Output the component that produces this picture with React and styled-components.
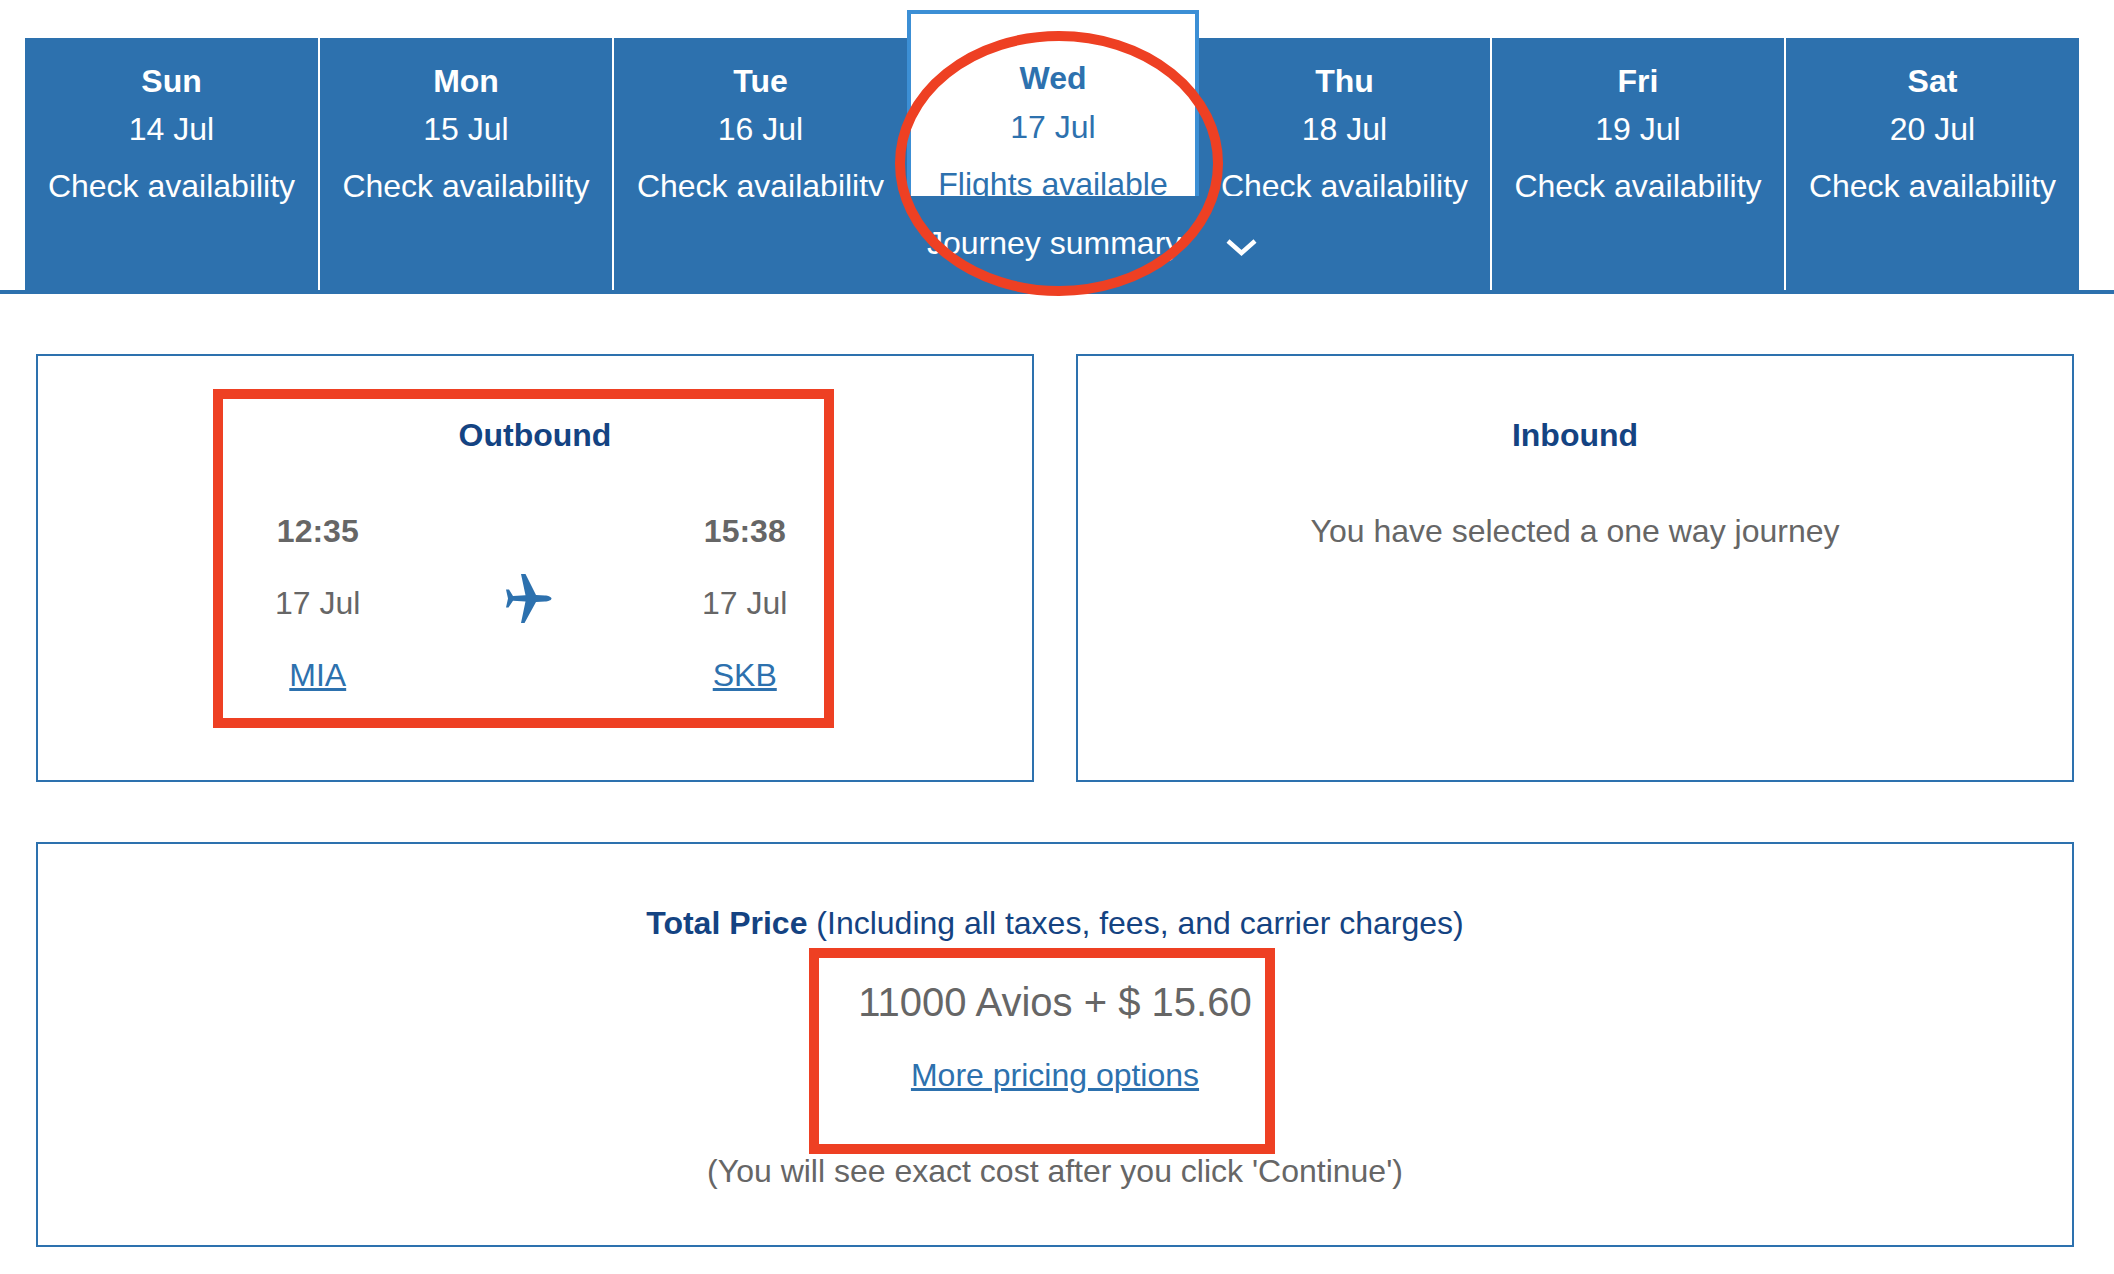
import React from "react";
import styled, { createGlobalStyle } from "styled-components";

const BLUE = "#2d71ae";
const NAVY = "#144382";
const GREY = "#666666";
const RED = "#ee4023";

const GlobalStyle = createGlobalStyle`
  html, body {
    margin: 0;
    background: #fff;
  }
  body {
    font-family: "Liberation Sans", Arial, sans-serif;
    font-size: 32px;
    line-height: 48px;
    color: ${GREY};
  }
  * {
    box-sizing: border-box;
  }
`;

const Page = styled.div`
  position: relative;
  width: 2114px;
  height: 1274px;
  overflow: hidden;
`;

const TabBar = styled.div`
  display: grid;
  grid-template-columns: 295px 294px 293px 292px 293px 294px 293px;
  height: 294px;
  padding: 38px 35px 0 25px;
  border-bottom: 4px solid ${BLUE};
`;

const Tab = styled.div`
  position: relative;
  height: 252px;
  padding-top: 19px;
  text-align: center;
  color: #fff;
  background: ${BLUE};
  border-right: ${(props) => (props.$divider ? "2px solid #fff" : "none")};
`;

const SelectedTab = styled(Tab)`
  margin-top: -28px;
  height: 280px;
  padding-top: 40px;
  color: ${BLUE};
  background: #fff;
  border: 4px solid #3c8fd5;
  border-bottom: none;
`;

const DayName = styled.div`
  font-weight: bold;
`;

const SelectedDate = styled.div`
  margin-top: 1px;
`;

const Status = styled.div`
  margin-top: 9px;
  white-space: nowrap;
`;

const JourneySummary = styled.div`
  position: absolute;
  left: 820px;
  top: 196px;
  width: 471px;
  height: 98px;
  padding: 23px 0 0 107px;
  display: flex;
  align-items: flex-start;
  gap: 45px;
  color: #fff;
  background: ${BLUE};
  white-space: nowrap;
`;

const Chevron = styled.svg`
  flex: none;
  margin-top: 20px;
`;

const Ellipse = styled.svg`
  position: absolute;
  left: 895px;
  top: 31px;
  pointer-events: none;
`;

const Main = styled.main`
  display: flex;
  flex-direction: column;
  gap: 60px;
  padding: 60px 40px 0 36px;
`;

const CardRow = styled.div`
  display: grid;
  grid-template-columns: 1fr 1fr;
  gap: 42px;
`;

const Card = styled.section`
  position: relative;
  height: ${(props) => props.$height}px;
  padding-top: 55px;
  text-align: center;
  border: 2px solid ${BLUE};
`;

const CardTitle = styled.h2`
  margin: 0;
  font-size: 32px;
  line-height: 48px;
  font-weight: bold;
  color: ${NAVY};
`;

const Note = styled.p`
  margin: 48px 0 0;
`;

const Route = styled.div`
  display: grid;
  grid-template-columns: repeat(3, 213.5px);
  margin: 48px 0 0 173px;
`;

const Stop = styled.div`
  display: flex;
  flex-direction: column;
  gap: 24px;
`;

const Time = styled.div`
  font-weight: bold;
`;

const PlaneCell = styled.div`
  display: flex;
  align-items: center;
  justify-content: center;
  padding: 0 6px 10px 0;
`;

const Link = styled.a`
  color: ${BLUE};
  text-decoration: underline;
`;

const PriceHeading = styled.div`
  color: ${NAVY};
`;

const Price = styled.div`
  margin-top: 25px;
  font-size: 40px;
  line-height: 60px;
`;

const PriceLink = styled.div`
  margin-top: 19px;
`;

const Disclaimer = styled.div`
  margin-top: 48px;
`;

const Highlight = styled.div`
  position: absolute;
  left: ${(props) => props.$left}px;
  top: ${(props) => props.$top}px;
  width: ${(props) => props.$width}px;
  height: ${(props) => props.$height}px;
  border: 10px solid ${RED};
  pointer-events: none;
`;

const days = [
  { name: "Sun", date: "14 Jul", divider: true },
  { name: "Mon", date: "15 Jul", divider: true },
  { name: "Tue", date: "16 Jul" },
  { name: "Wed", date: "17 Jul", status: "Flights available", selected: true },
  { name: "Thu", date: "18 Jul", divider: true },
  { name: "Fri", date: "19 Jul", divider: true },
  { name: "Sat", date: "20 Jul" },
];

const PlaneIcon = () => (
  <svg width="47" height="51" viewBox="26 23 47 51" fill={BLUE}>
    <path d="M72.5 48.5C72.5 46.8 69 45.6 66 45.4L57 45L46.5 24H42L46.5 45.2L34 46L30 39.5H27L29 48.5L27 57.5H29.5L34 50.8L46.5 51.6L42 73H45.5L57 52L66 51.6C69 51.4 72.5 50.2 72.5 48.5Z" />
  </svg>
);

const App = () => (
  <Page>
    <GlobalStyle />
    <TabBar>
      {days.map((day) => {
        const TabBox = day.selected ? SelectedTab : Tab;
        const DateLine = day.selected ? SelectedDate : "div";
        return (
          <TabBox key={day.name} $divider={day.divider}>
            <DayName>{day.name}</DayName>
            <DateLine>{day.date}</DateLine>
            <Status>{day.status || "Check availability"}</Status>
          </TabBox>
        );
      })}
    </TabBar>
    <JourneySummary>
      Journey summary
      <Chevron width="31" height="17" viewBox="0 0 31 17">
        <path d="M2 2L15.5 14L29 2" fill="none" stroke="#fff" strokeWidth="4.5" />
      </Chevron>
    </JourneySummary>
    <Ellipse width="328" height="265" viewBox="0 0 328 265">
      <ellipse cx="164" cy="132.5" rx="159" ry="127.5" fill="none" stroke={RED} strokeWidth="10" />
    </Ellipse>

    <Main>
      <CardRow>
        <Card $height={428}>
          <CardTitle>Outbound</CardTitle>
          <Route>
            <Stop>
              <Time>12:35</Time>
              <div>17 Jul</div>
              <div>
                <Link href="#mia">MIA</Link>
              </div>
            </Stop>
            <PlaneCell>
              <PlaneIcon />
            </PlaneCell>
            <Stop>
              <Time>15:38</Time>
              <div>17 Jul</div>
              <div>
                <Link href="#skb">SKB</Link>
              </div>
            </Stop>
          </Route>
          <Highlight $left={175} $top={33} $width={621} $height={339} />
        </Card>
        <Card $height={428}>
          <CardTitle>Inbound</CardTitle>
          <Note>You have selected a one way journey</Note>
        </Card>
      </CardRow>

      <Card $height={405}>
        <PriceHeading>
          <b>Total Price</b> (Including all taxes, fees, and carrier charges)
        </PriceHeading>
        <Price>11000 Avios + $ 15.60</Price>
        <PriceLink>
          <Link href="#pricing">More pricing options</Link>
        </PriceLink>
        <Disclaimer>(You will see exact cost after you click 'Continue')</Disclaimer>
        <Highlight $left={771} $top={104} $width={466} $height={206} />
      </Card>
    </Main>
  </Page>
);

export default App;
